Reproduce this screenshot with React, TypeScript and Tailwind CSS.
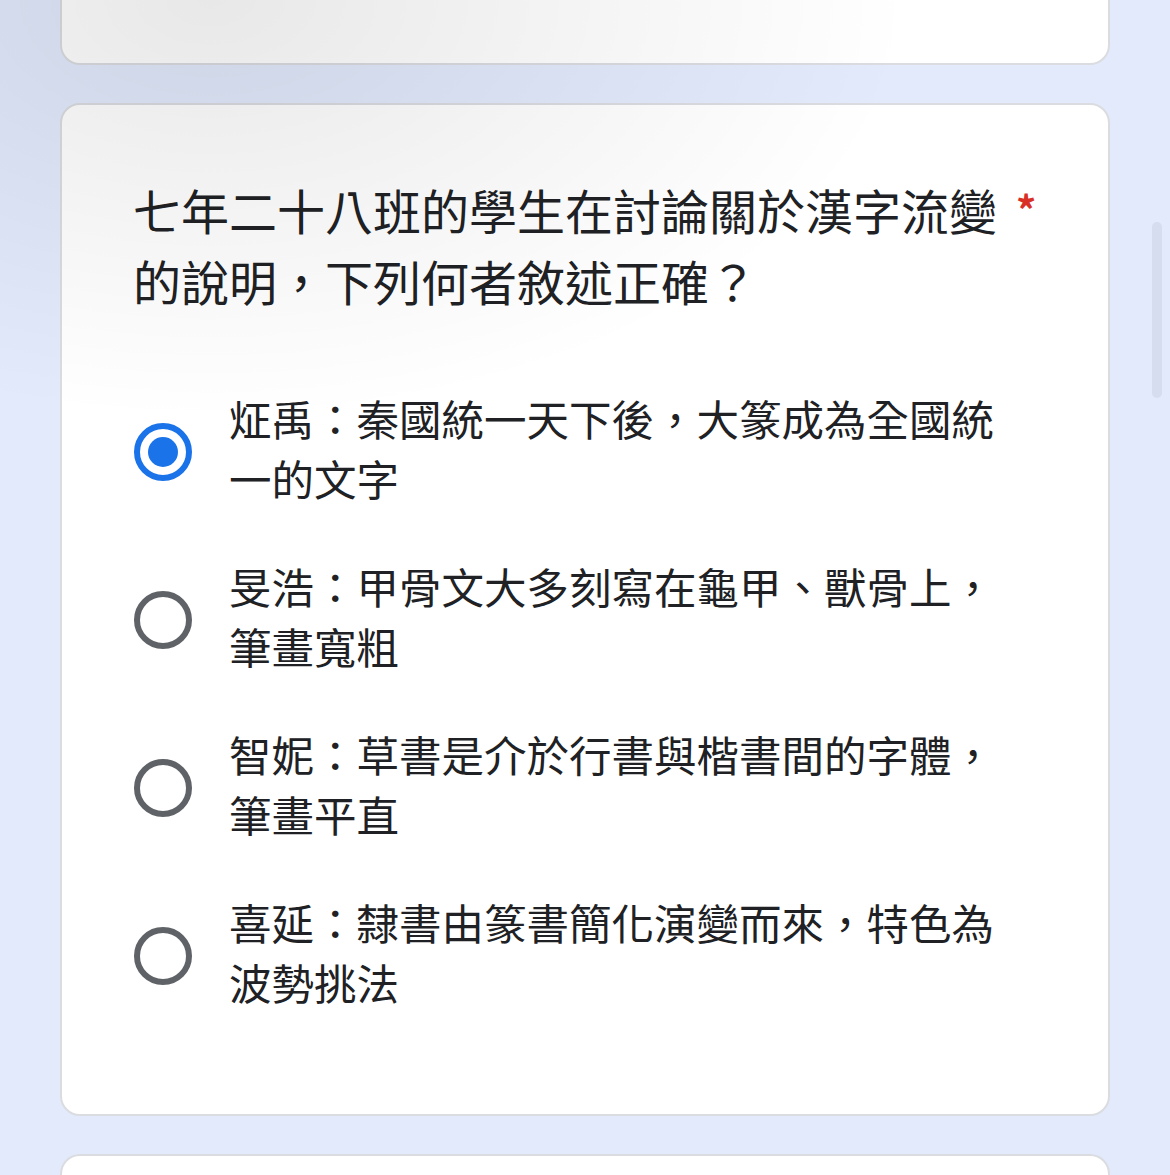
const font = { fontFamily: '"Noto Sans CJK TC", "Noto Sans", sans-serif' };

const options = [
  "炡禹：秦國統一天下後，大篆成為全國統一的文字",
  "旻浩：甲骨文大多刻寫在龜甲、獸骨上，筆畫寬粗",
  "智妮：草書是介於行書與楷書間的字體，筆畫平直",
  "喜延：隸書由篆書簡化演變而來，特色為波勢挑法",
];

function Radio({ checked }: { checked: boolean }) {
  if (checked) {
    return (
      <div className="mt-[8px] ml-[1px] flex h-[58px] w-[58px] shrink-0 items-center justify-center rounded-full border-[6px] border-[#1a73e8]">
        <div className="h-[30px] w-[30px] rounded-full bg-[#1a73e8]" />
      </div>
    );
  }
  return <div className="mt-[8px] ml-[1px] h-[58px] w-[58px] shrink-0 rounded-full border-[6px] border-[#5f6368]" />;
}

export default function App() {
  return (
    <div className="relative h-[1175px] overflow-hidden bg-[#e2eafc]" style={font}>
      <div className="flex flex-col gap-[38px] pl-[60px] pr-[60px]">
        <div className="h-[65px] rounded-b-[20px] border-2 border-t-0 border-[#dadce0] bg-white" />

        <div className="rounded-[20px] border-2 border-[#dadce0] bg-white pl-[71px] pr-[72px] pt-[69px] pb-[102px]">
          <div className="flex text-[#202124]">
            <div className="flex-1 text-[48px] leading-[71px]">
              七年二十八班的學生在討論關於漢字流變的說明，下列何者敘述正確？
            </div>
            <span className="w-[34px] pl-[14px] text-[40px] leading-[71px] font-bold text-[#d93025]">*</span>
          </div>

          <div className="mt-[72px] flex flex-col gap-[48px]">
            {options.map((t, i) => (
              <div key={i} className="flex items-center">
                <Radio checked={i === 0} />
                <div className="ml-[37px] w-[790px] text-[42.5px] leading-[60px] text-[#202124]">{t}</div>
              </div>
            ))}
          </div>
        </div>

        <div className="h-[80px] rounded-t-[20px] border-2 border-b-0 border-[#dadce0] bg-white" />
      </div>

      <div
        className="pointer-events-none absolute inset-0"
        style={{ background: "radial-gradient(ellipse 700px 420px at 18% 0%, rgba(0,0,0,0.09), rgba(0,0,0,0) 100%)" }}
      />

      <div className="absolute left-[1152px] top-[222px] h-[176px] w-[10px] rounded-full bg-[#d5ddee]" />
    </div>
  );
}
